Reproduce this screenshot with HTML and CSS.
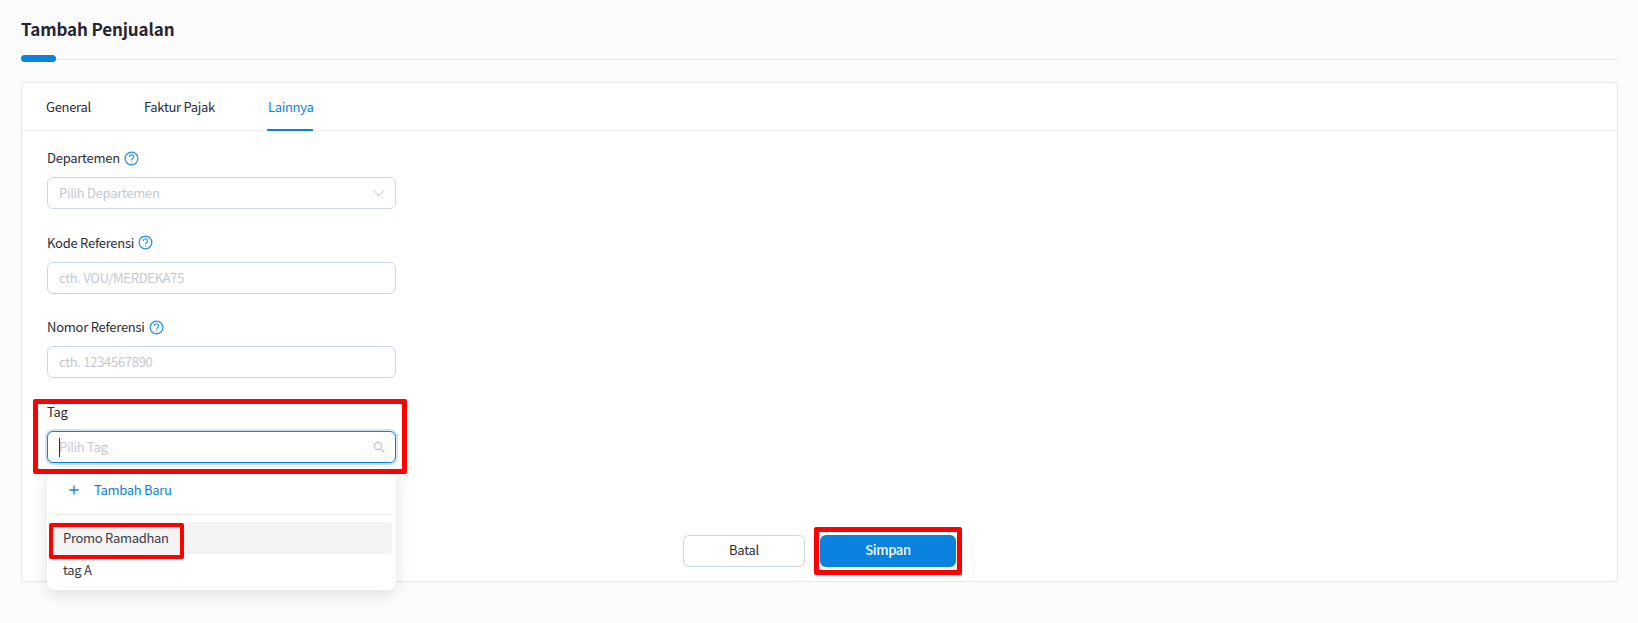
FILE: index.html
```html
<!DOCTYPE html>
<html lang="id">
<head>
<meta charset="utf-8">
<title>Tambah Penjualan</title>
<link rel="stylesheet" href="styles.css">
</head>
<body>
<main class="page">
  <h1 class="title">Tambah Penjualan</h1>
  <div class="rule"><span class="rule-accent"></span></div>
  <section class="card">
    <nav class="tabs">
      <a class="tab">General</a>
      <a class="tab">Faktur Pajak</a>
      <a class="tab active">Lainnya</a>
    </nav>
    <div class="form">
      <div class="field">
        <label class="label">Departemen
          <svg class="help" viewBox="0 0 16 16"><circle cx="8" cy="8" r="6.8"/><path d="M5.8 6.3a2.2 2.2 0 1 1 3.5 1.7c-.9.6-1.3 1-1.3 1.9"/><path d="M8 11.2v1.1"/></svg>
        </label>
        <div class="input"><span class="ph">Pilih Departemen</span>
          <svg class="chev" viewBox="0 0 12 12"><path d="M1 3.5l5 5.5 5-5.5"/></svg>
        </div>
      </div>
      <div class="field">
        <label class="label">Kode Referensi
          <svg class="help" viewBox="0 0 16 16"><circle cx="8" cy="8" r="6.8"/><path d="M5.8 6.3a2.2 2.2 0 1 1 3.5 1.7c-.9.6-1.3 1-1.3 1.9"/><path d="M8 11.2v1.1"/></svg>
        </label>
        <div class="input"><span class="ph">cth. VOU/MERDEKA75</span></div>
      </div>
      <div class="field">
        <label class="label">Nomor Referensi
          <svg class="help" viewBox="0 0 16 16"><circle cx="8" cy="8" r="6.8"/><path d="M5.8 6.3a2.2 2.2 0 1 1 3.5 1.7c-.9.6-1.3 1-1.3 1.9"/><path d="M8 11.2v1.1"/></svg>
        </label>
        <div class="input"><span class="ph">cth. 1234567890</span></div>
      </div>
      <div class="field tag-field">
        <label class="label">Tag</label>
        <div class="input focused"><span class="caret"></span><span class="ph">Pilih Tag</span>
          <svg class="search" viewBox="0 0 12 12"><circle cx="5" cy="5" r="3.6"/><path d="M7.8 7.8L11 11"/></svg>
        </div>
        <div class="menu">
          <div class="add"><svg class="plus" viewBox="0 0 10 10"><path d="M5 0.5v9M0.5 5h9"/></svg>Tambah Baru</div>
          <div class="menu-list">
            <div class="option hover">Promo Ramadhan<div class="mark mark-option"></div></div>
            <div class="option">tag A</div>
          </div>
        </div>
        <div class="mark mark-tag"></div>
      </div>
    </div>
    <div class="actions">
      <button class="btn ghost">Batal</button>
      <button class="btn primary">Simpan<span class="mark mark-save"></span></button>
    </div>
  </section>
</main>
</body>
</html>
```
FILE: styles.css
```css
* { box-sizing: border-box; }
html, body { margin: 0; height: 100%; }
body {
  background: #fcfcfc;
  font-family: "Noto Sans CJK SC", "Noto Sans", sans-serif;
  color: #2b2b36;
  overflow: hidden;
  letter-spacing: -0.3px;
}
.page { padding: 18px 20px 0 21px; height: 623px; }
.title { margin: 0; font-size: 17px; line-height: 22px; font-weight: 700; color: #252530; letter-spacing: -0.12px; }
.rule { margin-top: 19px; height: 1px; background: #e6e6e8; position: relative; }
.rule-accent { position: absolute; left: 0; top: -4px; width: 35px; height: 7px; border-radius: 4px; background: #0a82e0; }
.card {
  margin-top: 22px; height: 500px; background: #fff;
  border: 1px solid #e6e6e8; border-radius: 4px;
  position: relative;
}
.tabs { display: flex; gap: 53px; height: 48px; padding-left: 24px; border-bottom: 1px solid #f0f0f2; }
.tab { font-size: 13px; line-height: 47px; height: 48px; color: #2b2b36; }
.tab.active { color: #0a7fdc; border-bottom: 2px solid #0a82e0; margin-left: -1px; padding: 0 0 0 1px; }
.form { width: 349px; margin-left: 25px; padding-top: 17px; }
.field { height: 84.5px; position: relative; }
.label { display: flex; align-items: center; gap: 4px; height: 20px; font-size: 13px; line-height: 20px; letter-spacing: -0.25px; color: #2b2b36; }
.help { width: 15px; height: 15px; fill: none; stroke: #2a8fe0; stroke-width: 1.3; }
.input {
  margin-top: 9px; height: 32px; display: flex; align-items: center; padding: 0 11px 1px;
  border: 1px solid #ccd6e2; border-radius: 6px; background: #fff; font-size: 13px; position: relative;
}
.ph { color: #c6c8cf; }
.chev { width: 12px; height: 12px; position: absolute; right: 10px; top: 9px; fill: none; stroke: #c0c2c8; stroke-width: 1; }
.search { width: 12px; height: 12px; position: absolute; right: 10px; top: 9px; fill: none; stroke: #c0c2c8; stroke-width: 1.2; }
.focused { border-color: #0a82e0; box-shadow: 0 0 0 2px #d5e3f1; }
.caret { position: absolute; left: 11px; top: 6px; width: 1px; height: 19px; background: #252530; }
.menu {
  position: absolute; left: 0; right: 0; top: 65px; height: 123px; background: #fff; border-radius: 8px; z-index: 2;
  box-shadow: 0 4px 16px rgba(40, 50, 70, .14); padding: 0 4px;
}
.add { height: 48px; display: flex; align-items: center; padding: 0 0 0 18px; gap: 15px; color: #0a7fdc; font-size: 13px; line-height: 20px; border-bottom: 1px solid #eeeeef; }
.plus { width: 10px; height: 10px; fill: none; stroke: #0a82e0; stroke-width: 1.3; }
.menu-list { padding-top: 7px; }
.option { height: 32px; line-height: 31px; padding-left: 12px; font-size: 13px; color: #3a3a44; border-radius: 4px; position: relative; }
.option.hover { background: #f4f4f5; }
.actions { position: absolute; left: 661px; top: 452px; display: flex; gap: 15px; }
.btn { height: 32px; border-radius: 6px; font: inherit; font-size: 13px; letter-spacing: -0.3px; line-height: 28px; padding: 0 0 2px; position: relative; }
.ghost { width: 122px; background: #fff; border: 1px solid #ccd6e2; color: #2b2b36; }
.primary { width: 136px; background: #0a82e0; border: 0; color: #fff; font-weight: 500; }
.mark { position: absolute; border-style: solid; border-color: #f00; border-radius: 2px; pointer-events: none; z-index: 3; }
.mark-tag { left: -14px; right: -11px; top: -2.5px; height: 75px; border-width: 5px; }
.mark-option { left: -2px; top: 1px; width: 135px; height: 36px; border-width: 4px; }
.mark-save { left: -6px; right: -6px; top: -8px; bottom: -8px; border-width: 5px; }
```
